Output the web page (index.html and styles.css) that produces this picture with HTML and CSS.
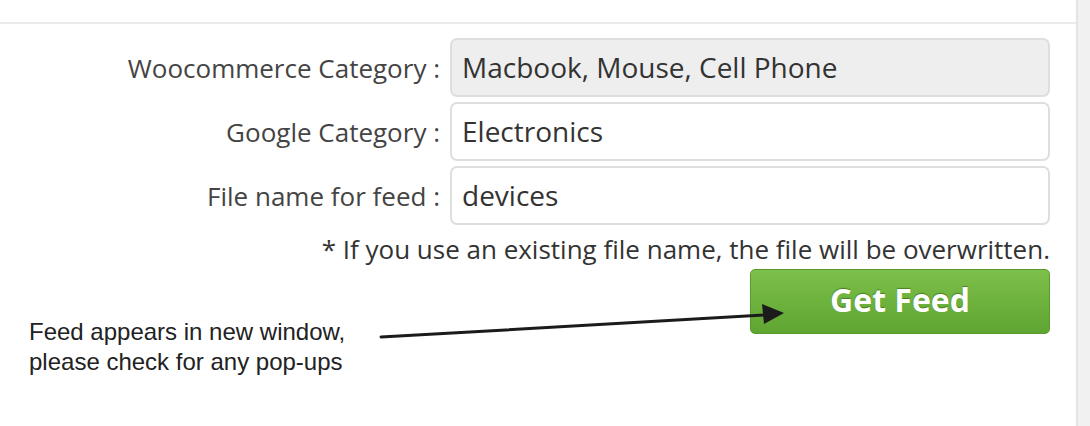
FILE: index.html
```html
<!DOCTYPE html>
<html>
<head>
<meta charset="utf-8">
<link rel="stylesheet" href="styles.css">
</head>
<body>
<div class="page">
  <main class="main">
    <div class="topbar"></div>
    <form class="form">
      <label class="label">Woocommerce Category :</label>
      <div class="field field-disabled">Macbook, Mouse, Cell Phone</div>
      <label class="label">Google Category :</label>
      <div class="field">Electronics</div>
      <label class="label">File name for feed :</label>
      <div class="field">devices</div>
      <p class="note">* If you use an existing file name, the file will be overwritten.</p>
      <div class="action-row">
        <p class="annotation">Feed appears in new window,<br>please check for any pop-ups</p>
        <button type="button" class="btn">Get Feed</button>
      </div>
    </form>
    <svg class="arrow" width="1090" height="426" viewBox="0 0 1090 426">
      <line x1="381" y1="337" x2="766" y2="315" stroke="#1b1b1b" stroke-width="3" stroke-linecap="round"/>
      <polygon points="784,313 762,304 764,324" fill="#1b1b1b"/>
    </svg>
  </main>
  <aside class="side"></aside>
</div>
</body>
</html>
```
FILE: styles.css
```css
html, body {
  margin: 0;
  padding: 0;
  background: #fff;
}
.page {
  display: flex;
  width: 1090px;
  height: 426px;
  overflow: hidden;
}
.main {
  position: relative;
  width: 1076px;
  flex: none;
}
.side {
  flex: 1;
  background: #f1f1f1;
  border-left: 2px solid #e4e4e4;
}
.topbar {
  height: 22px;
  border-bottom: 2px solid #ebebeb;
}
.form {
  display: grid;
  grid-template-columns: 440px 600px;
  column-gap: 10px;
  row-gap: 5px;
  margin: 14px 0 0 0;
  font-family: "Open Sans", sans-serif;
  color: #333;
}
.label {
  text-align: right;
  font-size: 26px;
  color: #444;
  align-self: center;
  line-height: 32px;
  white-space: nowrap;
}
.field {
  box-sizing: border-box;
  height: 59px;
  border: 2px solid #dedede;
  border-radius: 7px;
  background: #fff;
  font-size: 28px;
  line-height: 55px;
  padding: 0 10px;
  color: #333;
}
.field-disabled {
  background: #eeeeee;
}
.note {
  grid-column: 1 / 3;
  margin: 2px 0 0 0;
  text-align: right;
  font-size: 26px;
  line-height: 34px;
  color: #333;
}
.action-row {
  grid-column: 1 / 3;
  display: flex;
  justify-content: space-between;
  align-items: flex-start;
  margin-top: -2px;
}
.annotation {
  margin: 48px 0 0 29px;
  font-family: "Liberation Sans", Arial, sans-serif;
  font-size: 24px;
  line-height: 30px;
  color: #222;
}
.btn {
  width: 300px;
  height: 65px;
  border: 1px solid #5a9a2c;
  border-radius: 5px;
  background: linear-gradient(#7dc04b, #5fa531);
  color: #fff;
  font-family: "Open Sans", sans-serif;
  font-weight: 700;
  font-size: 32px;
  text-shadow: 0 -1px 1px rgba(40, 90, 10, 0.6);
  padding: 0 0 4px 0;
  cursor: pointer;
}
.arrow {
  position: absolute;
  left: 0;
  top: 0;
  pointer-events: none;
}
```
